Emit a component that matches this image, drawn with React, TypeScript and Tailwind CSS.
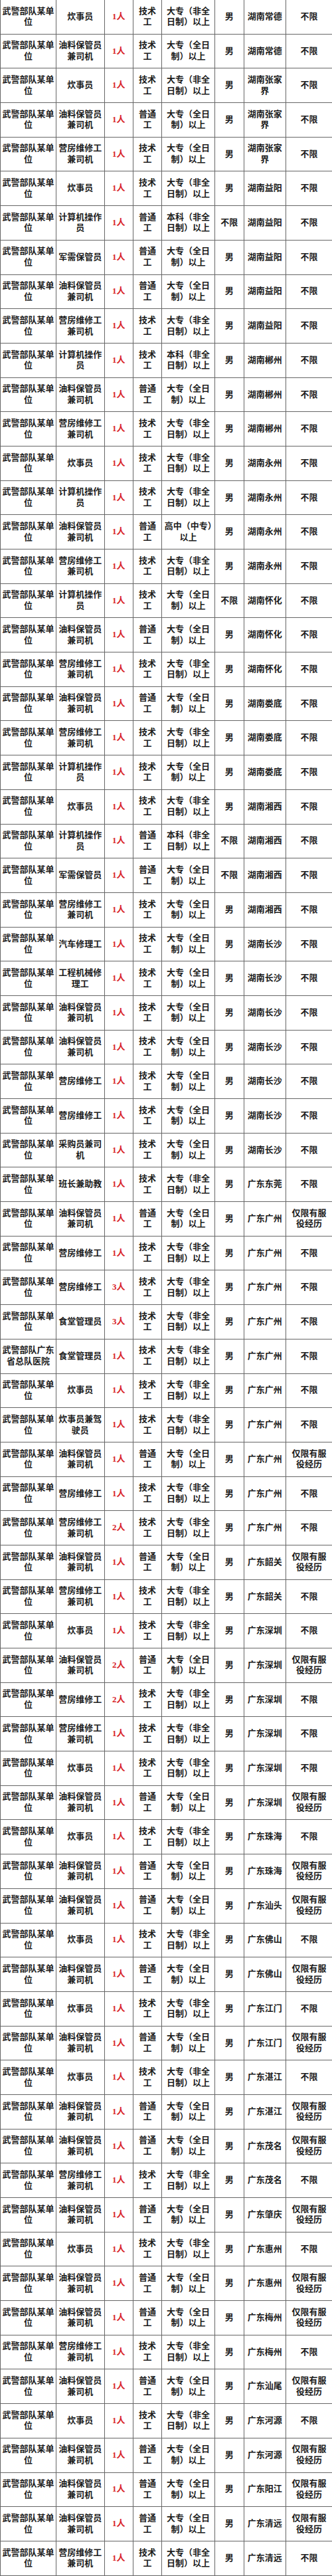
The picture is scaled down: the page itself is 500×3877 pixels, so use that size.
import React from 'react';

const U = '武警部队某单位';
const H = '武警部队广东省总队医院';
const A = '大专（非全日制）以上';
const B = '大专（全日制）以上';
const C = '本科（非全日制）以上';
const D = '高中（中专）以上';
const CS = '炊事员';
const YL = '油料保管员兼司机';
const YF = '营房维修工兼司机';
const YW = '营房维修工';
const JS = '计算机操作员';
const JX = '军需保管员';
const T = '技术工';
const P = '普通工';
const M = '男';
const N = '不限';
const F = '仅限有服役经历';

type Row = [string, string, string, string, string, string, string, string];

const rows: Row[] = [
  [U, CS, '1人', T, A, M, '湖南常德', N],
  [U, YL, '1人', T, B, M, '湖南常德', N],
  [U, CS, '1人', T, A, M, '湖南张家界', N],
  [U, YL, '1人', P, B, M, '湖南张家界', N],
  [U, YF, '1人', T, B, M, '湖南张家界', N],
  [U, CS, '1人', T, A, M, '湖南益阳', N],
  [U, JS, '1人', P, C, N, '湖南益阳', N],
  [U, JX, '1人', P, B, M, '湖南益阳', N],
  [U, YL, '1人', P, B, M, '湖南益阳', N],
  [U, YF, '1人', T, A, M, '湖南益阳', N],
  [U, JS, '1人', T, C, M, '湖南郴州', N],
  [U, YL, '1人', P, B, M, '湖南郴州', N],
  [U, YF, '1人', T, A, M, '湖南郴州', N],
  [U, CS, '1人', T, A, M, '湖南永州', N],
  [U, JS, '1人', T, A, M, '湖南永州', N],
  [U, YL, '1人', P, D, M, '湖南永州', N],
  [U, YF, '1人', T, A, M, '湖南永州', N],
  [U, JS, '1人', T, B, N, '湖南怀化', N],
  [U, YL, '1人', P, B, M, '湖南怀化', N],
  [U, YF, '1人', T, A, M, '湖南怀化', N],
  [U, YL, '1人', P, B, M, '湖南娄底', N],
  [U, YF, '1人', T, A, M, '湖南娄底', N],
  [U, JS, '1人', T, B, M, '湖南娄底', N],
  [U, CS, '1人', T, A, M, '湖南湘西', N],
  [U, JS, '1人', P, C, N, '湖南湘西', N],
  [U, JX, '1人', P, B, N, '湖南湘西', N],
  [U, YF, '1人', T, B, M, '湖南湘西', N],
  [U, '汽车修理工', '1人', T, B, M, '湖南长沙', N],
  [U, '工程机械修理工', '1人', T, B, M, '湖南长沙', N],
  [U, YL, '1人', T, B, M, '湖南长沙', N],
  [U, YL, '1人', T, B, M, '湖南长沙', N],
  [U, YW, '1人', T, B, M, '湖南长沙', N],
  [U, YW, '1人', T, B, M, '湖南长沙', N],
  [U, '采购员兼司机', '1人', T, B, M, '湖南长沙', N],
  [U, '班长兼助教', '1人', T, A, M, '广东东莞', N],
  [U, YL, '1人', P, B, M, '广东广州', F],
  [U, YW, '1人', T, A, M, '广东广州', N],
  [U, YW, '3人', T, A, M, '广东广州', N],
  [U, '食堂管理员', '3人', T, A, M, '广东广州', N],
  [H, '食堂管理员', '1人', T, A, M, '广东广州', N],
  [U, CS, '1人', T, A, M, '广东广州', N],
  [U, '炊事员兼驾驶员', '1人', T, A, M, '广东广州', N],
  [U, YL, '1人', P, B, M, '广东广州', F],
  [U, YW, '1人', T, A, M, '广东广州', N],
  [U, YF, '2人', T, A, M, '广东广州', N],
  [U, YL, '1人', P, B, M, '广东韶关', F],
  [U, YF, '1人', T, A, M, '广东韶关', N],
  [U, CS, '1人', T, A, M, '广东深圳', N],
  [U, YL, '2人', P, B, M, '广东深圳', F],
  [U, YW, '2人', T, A, M, '广东深圳', N],
  [U, YF, '1人', T, A, M, '广东深圳', N],
  [U, CS, '1人', T, A, M, '广东深圳', N],
  [U, YL, '1人', P, B, M, '广东深圳', F],
  [U, CS, '1人', T, A, M, '广东珠海', N],
  [U, YL, '1人', P, B, M, '广东珠海', F],
  [U, YL, '1人', P, B, M, '广东汕头', F],
  [U, CS, '1人', T, A, M, '广东佛山', N],
  [U, YL, '1人', P, B, M, '广东佛山', F],
  [U, CS, '1人', T, A, M, '广东江门', N],
  [U, YL, '1人', P, B, M, '广东江门', F],
  [U, CS, '1人', T, A, M, '广东湛江', N],
  [U, YL, '1人', P, B, M, '广东湛江', F],
  [U, YL, '1人', P, B, M, '广东茂名', F],
  [U, YF, '1人', T, A, M, '广东茂名', N],
  [U, YL, '1人', P, B, M, '广东肇庆', F],
  [U, CS, '1人', T, A, M, '广东惠州', N],
  [U, YL, '1人', P, B, M, '广东惠州', F],
  [U, YL, '1人', P, B, M, '广东梅州', F],
  [U, YF, '1人', T, A, M, '广东梅州', N],
  [U, YL, '1人', P, B, M, '广东汕尾', F],
  [U, CS, '1人', T, A, M, '广东河源', N],
  [U, YL, '1人', P, B, M, '广东河源', F],
  [U, YL, '1人', P, B, M, '广东阳江', F],
  [U, YL, '1人', P, B, M, '广东清远', F],
  [U, YF, '1人', T, A, M, '广东清远', N],
];

const cellBase =
  'flex items-center justify-center text-center px-[2px] leading-[16.7px] border-r border-[#666]';

export default function App() {
  return (
    <div
      className="w-[500px] bg-white text-[13px] font-bold text-[#1c1c1c]"
      style={{ fontFamily: '"Liberation Serif", "Noto Sans CJK SC", serif' }}
    >
      {rows.map((r, i) => (
        <div key={i} className="flex h-[51.693px] border-l border-b border-[#666]">
          <div className={`${cellBase} w-[84px] shrink-0`}>{r[0]}</div>
          <div className={`${cellBase} w-[72.5px] shrink-0`}>{r[1]}</div>
          <div className={`${cellBase} w-[43.5px] shrink-0 text-[#d8242a]`}>{r[2]}</div>
          <div className={`${cellBase} w-[43px] shrink-0`}>{r[3]}</div>
          <div className={`${cellBase} w-[80px] shrink-0`}>{r[4]}</div>
          <div className={`${cellBase} w-[43.5px] shrink-0`}>{r[5]}</div>
          <div className={`${cellBase} w-[63.5px] shrink-0 border-[#9a9a9a]`}>{r[6]}</div>
          <div className="flex flex-1 items-center justify-center text-center px-[3px] leading-[16.7px]">
            {r[7]}
          </div>
        </div>
      ))}
    </div>
  );
}
